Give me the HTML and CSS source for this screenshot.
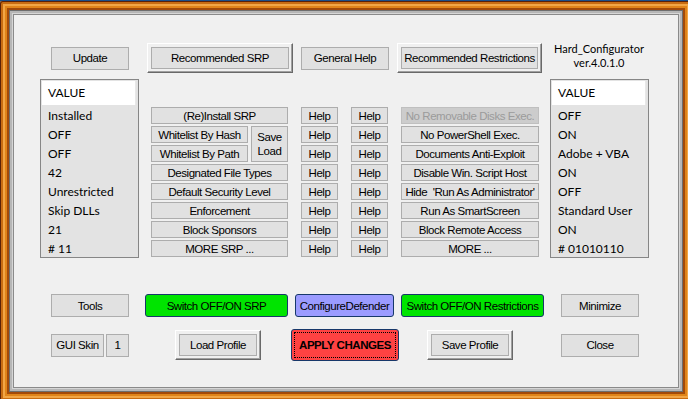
FILE: index.html
```html
<!DOCTYPE html>
<html lang="en">
<head>
  <meta charset="UTF-8">
  <title>Hard_Configurator</title>
  <link rel="stylesheet" href="styles.css">
</head>
<body>
<div class="window">
  <div class="client">

    <div class="toprow">
      <button class="btn side">Update</button>
      <div class="raised rec-srp"><span class="face">Recommended SRP</span></div>
      <button class="btn ghelp">General Help</button>
      <div class="raised rec-res"><span class="face">Recommended Restrictions</span></div>
      <div class="title">
        <div>Hard_Configurator</div>
        <div>ver.4.0.1.0</div>
      </div>
    </div>

    <div class="mainrow">
      <div class="list">
        <div class="list-head">VALUE</div>
        <div class="item">Installed</div>
        <div class="item">OFF</div>
        <div class="item">OFF</div>
        <div class="item">42</div>
        <div class="item">Unrestricted</div>
        <div class="item">Skip DLLs</div>
        <div class="item">21</div>
        <div class="item"># 11</div>
      </div>

      <div class="grid">
        <button class="btn">(Re)Install SRP</button>
        <button class="btn">Help</button>
        <button class="btn">Help</button>
        <button class="btn disabled">No Removable Disks Exec.</button>

        <div class="whitelist">
          <div class="wl-col">
            <button class="btn">Whitelist By Hash</button>
            <button class="btn">Whitelist By Path</button>
          </div>
          <button class="btn saveload">Save<br>Load</button>
        </div>
        <button class="btn">Help</button>
        <button class="btn">Help</button>
        <button class="btn">No PowerShell Exec.</button>
        <button class="btn">Help</button>
        <button class="btn">Help</button>
        <button class="btn">Documents Anti-Exploit</button>

        <button class="btn">Designated File Types</button>
        <button class="btn">Help</button>
        <button class="btn">Help</button>
        <button class="btn">Disable Win. Script Host</button>

        <button class="btn">Default Security Level</button>
        <button class="btn">Help</button>
        <button class="btn">Help</button>
        <button class="btn">Hide&nbsp; 'Run As Administrator'</button>

        <button class="btn">Enforcement</button>
        <button class="btn">Help</button>
        <button class="btn">Help</button>
        <button class="btn">Run As SmartScreen</button>

        <button class="btn">Block Sponsors</button>
        <button class="btn">Help</button>
        <button class="btn">Help</button>
        <button class="btn">Block Remote Access</button>

        <button class="btn">MORE SRP ...</button>
        <button class="btn">Help</button>
        <button class="btn">Help</button>
        <button class="btn">MORE ...</button>
      </div>

      <div class="list right">
        <div class="list-head">VALUE</div>
        <div class="item">OFF</div>
        <div class="item">ON</div>
        <div class="item">Adobe + VBA</div>
        <div class="item">ON</div>
        <div class="item">OFF</div>
        <div class="item">Standard User</div>
        <div class="item">ON</div>
        <div class="item"># 01010110</div>
      </div>
    </div>

    <div class="row3">
      <button class="btn side">Tools</button>
      <button class="color green sw-srp">Switch OFF/ON SRP</button>
      <button class="color lavender defender">ConfigureDefender</button>
      <button class="color green sw-res">Switch OFF/ON Restrictions</button>
      <button class="btn side minimize">Minimize</button>
    </div>

    <div class="row4">
      <button class="btn skin">GUI Skin</button>
      <button class="btn skin-no">1</button>
      <div class="raised profile load"><span class="face">Load Profile</span></div>
      <button class="color red apply"><span class="focus">APPLY CHANGES</span></button>
      <div class="raised profile save"><span class="face">Save Profile</span></div>
      <button class="btn side close">Close</button>
    </div>

  </div>
</div>
</body>
</html>
```

FILE: styles.css
```css
html, body {
  margin: 0;
  overflow: hidden;
}

body {
  background: #1b4f8a;
  width: 688px;
  height: 399px;
}

.window {
  margin-top: 1px;
  width: 692px;
  height: 400px;
  box-sizing: border-box;
  padding: 14px;
  background: #f0f0f0;
  border-radius: 3px;
  box-shadow:
    inset 0 0 0 1px #5a2208,
    inset 0 0 0 3px #c86c12,
    inset 0 0 0 5px #f2a646,
    inset 0 0 0 7px #e0841a,
    inset 0 0 0 9px #a24a0a,
    inset 0 0 0 10px #6e6e6e,
    inset 0 0 0 12px #b6b6b6,
    inset 0 0 0 13px #d6d6d6,
    inset 0 0 0 14px #8a8a8a;
}

.client {
  height: 100%;
  font-family: "Liberation Sans", Arial, sans-serif;
  font-size: 11.5px;
  letter-spacing: -0.45px;
  color: #000;
}

/* buttons */
.btn {
  box-sizing: border-box;
  margin: 0;
  padding: 0;
  font: inherit;
  letter-spacing: inherit;
  color: #000;
  background: #e1e1e1;
  border: 1px solid #adadad;
  white-space: nowrap;
  overflow: hidden;
}

.btn.disabled {
  background: #cccccc;
  border-color: #bfbfbf;
  color: #9b9b9b;
}

.raised {
  box-sizing: border-box;
  display: flex;
  padding: 3px;
  background: #f0f0f0;
  border: 1px solid;
  border-color: #ffffff #696969 #696969 #ffffff;
  box-shadow: inset -1px -1px 0 #a0a0a0;
}

.raised .face {
  flex: 1;
  display: flex;
  align-items: center;
  justify-content: center;
  background: #e1e1e1;
  border: 1px solid #adadad;
  white-space: nowrap;
}

.color {
  box-sizing: border-box;
  margin: 0;
  padding: 0;
  height: 23px;
  font: inherit;
  letter-spacing: inherit;
  color: #000;
  border: 1px solid #17386a;
  border-radius: 3px;
  white-space: nowrap;
}

.green { background: #00e400; }
.lavender { background: #9b9bff; }
.red { background: #ff4242; }

/* top row */
.toprow {
  display: flex;
  align-items: center;
  height: 30px;
  margin-top: 28px;
}

.side {
  width: 78px;
  height: 23px;
  margin-left: 37px;
}

.rec-srp {
  width: 146px;
  height: 30px;
  margin-left: 18px;
}

.ghelp {
  width: 88px;
  height: 23px;
  margin-left: 8px;
}

.rec-res {
  width: 145px;
  height: 30px;
  margin-left: 8px;
}

.title {
  width: 96px;
  margin-left: 9px;
  margin-top: -5px;
  text-align: center;
  font-family: Lato, sans-serif;
  font-size: 11px;
  letter-spacing: 0;
  line-height: 13.5px;
}

/* middle */
.mainrow {
  display: flex;
  align-items: flex-start;
  margin-top: 6px;
}

.list {
  box-sizing: border-box;
  width: 99px;
  height: 179px;
  margin-left: 26px;
  padding: 1px 2px 0 1px;
  background: #e3e3e3;
  border: 1px solid #868686;
  font-family: Lato, sans-serif;
  font-size: 12px;
  letter-spacing: 0;
}

.list.right {
  margin-left: 11px;
}

.list-head {
  height: 24px;
  line-height: 24px;
  padding-left: 6px;
  margin-bottom: 1px;
  background: #fff;
  border-right: 1px solid #e8e8e8;
}

.item {
  height: 19px;
  line-height: 19px;
  padding-left: 6px;
}

.grid {
  display: grid;
  grid-template-columns: 137px 37px 37px 138px;
  grid-auto-rows: 17px;
  column-gap: 13px;
  row-gap: 2px;
  margin-left: 12px;
  margin-top: 28px;
}

.whitelist {
  grid-row: span 2;
  display: flex;
  gap: 3px;
}

.wl-col {
  display: flex;
  flex-direction: column;
  gap: 2px;
  width: 97px;
}

.wl-col .btn {
  height: 17px;
}

.saveload {
  width: 37px;
  line-height: 14px;
}

/* bottom rows */
.row3 {
  display: flex;
  align-items: center;
  margin-top: 36px;
}

.sw-srp {
  width: 143px;
  margin-left: 16px;
}

.defender {
  width: 99px;
  margin-left: 7px;
}

.sw-res {
  width: 143px;
  margin-left: 7px;
}

.minimize {
  margin-left: 17px;
}

.row4 {
  display: flex;
  align-items: center;
  height: 32px;
  margin-top: 12px;
}

.skin {
  width: 53px;
  height: 23px;
  margin-left: 37px;
}

.skin-no {
  width: 23px;
  height: 23px;
  margin-left: 2px;
}

.profile {
  width: 86px;
  height: 30px;
}

.load {
  margin-left: 46px;
}

.apply {
  width: 108px;
  height: 32px;
  margin-left: 30px;
  padding: 2px;
  font-weight: bold;
}

.apply .focus {
  display: flex;
  align-items: center;
  justify-content: center;
  height: 100%;
  border: 1px dotted #000;
  box-sizing: border-box;
}

.save {
  margin-left: 28px;
}

.close {
  margin-left: 48px;
}
```
